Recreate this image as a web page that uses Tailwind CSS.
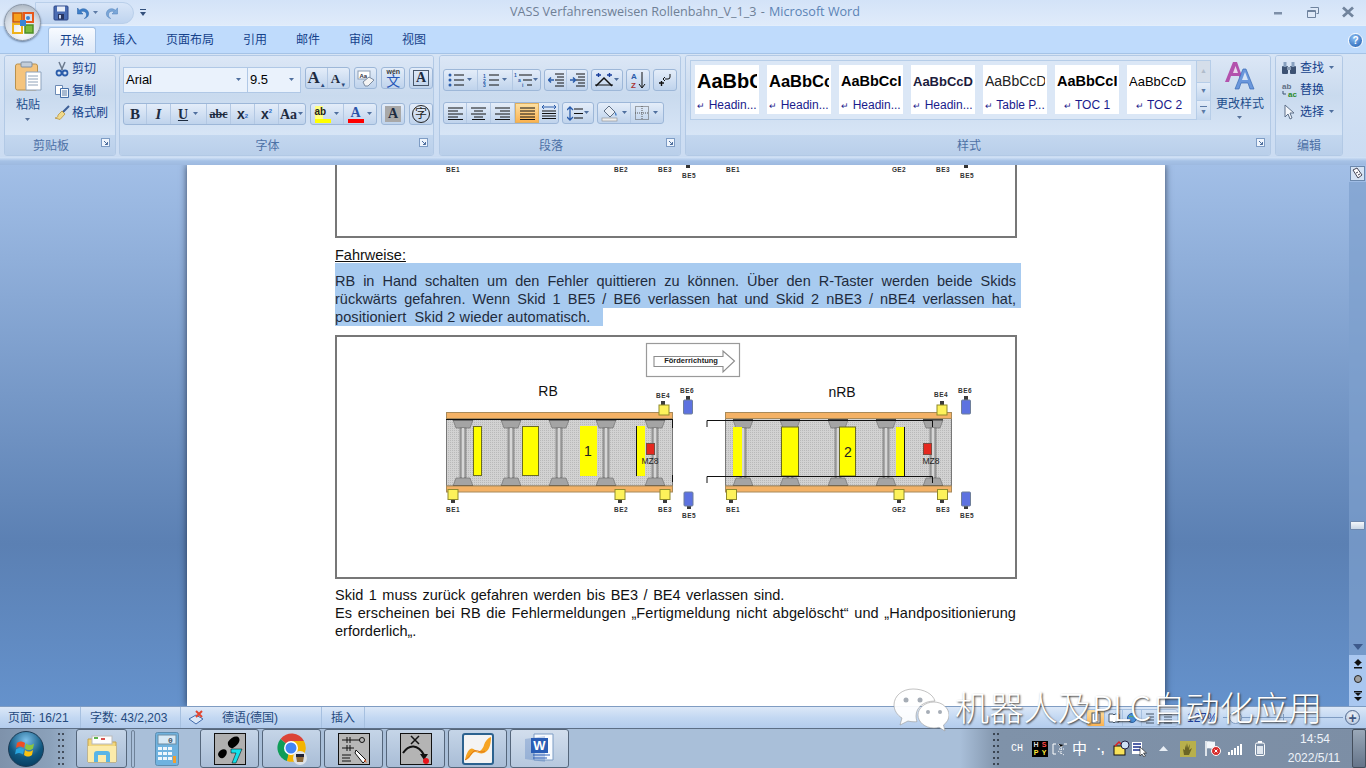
<!DOCTYPE html>
<html lang="de">
<head>
<meta charset="utf-8">
<title>VASS Verfahrensweisen Rollenbahn_V_1_3 - Microsoft Word</title>
<script src="https://cdn.jsdelivr.net/npm/@tailwindcss/browser@4"></script>
</head>
<body class="m-0 overflow-hidden">
<div class="relative flex h-[768px] w-[1366px] flex-col overflow-hidden font-['Liberation_Sans','Noto_Sans_CJK_SC',sans-serif] text-[12px] text-[#15428b]">

  <!-- title bar -->
  <div class="relative flex h-[26px] shrink-0 items-center justify-center border-b border-[#e3eefb] bg-linear-to-b from-[#d3e3f8] to-[#e0ebfa]">
    <span class="ml-[4px] font-['Open_Sans',sans-serif] text-[12.600px] text-[#6f8096]">VASS Verfahrensweisen Rollenbahn_V_1_3 <span class="px-[1px]">-</span> <span class="text-[#5a83b5]">Microsoft Word</span></span>
    <div class="absolute right-[11px] top-0 flex h-[24px] items-center gap-[21px]">
      <svg width="14" height="14" viewBox="0 0 14 14"><rect x="3" y="7" width="8" height="2.500" fill="#7d8fa8"/></svg>
      <svg width="14" height="14" viewBox="0 0 14 14"><path d="M4.500 2.500h8v6h-2M1.500 5.500h8v7h-8z" fill="#dfe9f7" stroke="#6f839e"/><rect x="2" y="5" width="7" height="2" fill="#6f839e"/></svg>
      <svg width="14" height="14" viewBox="0 0 14 14"><path d="M2 2.500l10 9M12 2.500l-10 9" stroke="#71849d" stroke-width="2.800"/></svg>
    </div>
  </div>

  <!-- office button and quick access -->
  <div class="absolute left-[35px] top-[2px] flex h-[22px] w-[99px] items-center gap-[2px] rounded-r-full border border-[#b9cfea] bg-linear-to-b from-[#d9e6f8] to-[#bfd4ef] pl-[17px]">
    <svg width="16" height="16" viewBox="0 0 16 16"><rect x="1" y="1" width="14" height="14" rx="1" fill="#4a6cb3" stroke="#2d4686"/><rect x="4" y="1.500" width="8" height="5" fill="#e8eef8"/><rect x="5" y="9" width="6" height="5.500" fill="#27345f"/><rect x="6" y="10" width="2" height="3.500" fill="#c6d4ec"/></svg>
    <svg class="ml-[3px]" width="16" height="16" viewBox="0 0 16 16"><path d="M3.500 3v6h5.500L6.800 6.800C9 5.500 12 6.500 12.500 9c.4 1.800-.6 3.500-2.200 4.500 3.300-.5 5-3.500 4-6.400C13.200 3.800 9 2.500 5.700 5.200z" fill="#3e7fc9" stroke="#235a9e" stroke-width=".5"/></svg>
    <svg class="ml-[1px]" width="6" height="4" viewBox="0 0 6 4"><path d="M0 0h5L2.500 3z" fill="#5d7ba6"/></svg>
    <svg class="ml-[4px]" width="16" height="16" viewBox="0 0 16 16"><path d="M12.500 3v6H7l2.200-2.200C7 5.500 4 6.500 3.500 9c-.4 1.800.6 3.500 2.200 4.500-3.300-.5-5-3.500-4-6.400C2.800 3.800 7 2.500 10.300 5.200z" fill="#7ba7d8" stroke="#4f7fb8" stroke-width=".5"/></svg>
  </div>
  <svg class="absolute left-[140px] top-[9px]" width="7" height="8" viewBox="0 0 7 8"><rect x="0" y="0" width="6" height="1" fill="#33507c"/><path d="M0 3h6L3 7z" fill="#33507c"/></svg>
  <div class="absolute left-[4px] top-[4px] z-20 flex h-[37px] w-[37px] items-center justify-center rounded-full border border-[#8c98a8] bg-[radial-gradient(circle_at_50%_75%,#ffffff,#d6dde6_55%,#98a4b2)] shadow-[0_1px_2px_rgba(40,60,90,.6)]">
    <svg width="24" height="24" viewBox="0 0 24 24"><path d="M2 2h9v9H2z" fill="#f6a11e" stroke="#c9550c" stroke-width="1.500"/><path d="M13 2h9v9h-9z" fill="none" stroke="#e8581a" stroke-width="2"/><path d="M2 13h9v9H2z" fill="none" stroke="#efb21c" stroke-width="2"/><path d="M14 14h8v8h-8z" fill="#7dbb3c" stroke="#4e8f24" stroke-width="1.500"/><rect x="9" y="9" width="6" height="6" fill="#3b84d6"/><circle cx="17" cy="7" r="2" fill="#3b84d6"/></svg>
  </div>

  <!-- tabs -->
  <div class="flex h-[27px] shrink-0 items-end bg-[#bfdbfc] pl-[48px] text-[12px]">
    <div class="flex h-[26px] w-[48px] items-center justify-center rounded-t-[3px] border border-b-0 border-[#a3c0e3] bg-linear-to-b from-[#f8fbff] to-[#dce8f8]">开始</div>
    <div class="ml-[17px] flex h-[26px] items-center gap-[29px]">
      <span>插入</span><span>页面布局</span><span>引用</span><span>邮件</span><span>审阅</span><span>视图</span>
    </div>
    <div class="ml-auto mb-[5px] mr-[3px] flex h-[15px] w-[15px] items-center justify-center rounded-full border border-[#fff] bg-[radial-gradient(circle_at_40%_30%,#8cc0f5,#1c59ad)] text-[10px] font-bold leading-none text-white">?</div>
  </div>

  <!-- ribbon -->
  <div class="flex h-[104px] shrink-0 gap-[3px] border-t border-[#a5c3e6] bg-linear-to-b from-[#d6e4f5] to-[#cbdcf2] pl-[4px] pt-[1px]">

    <!-- clipboard -->
    <section class="flex h-[101px] w-[112px] flex-col overflow-hidden rounded-[3px] border border-[#b2c9e5]">
      <div class="flex h-[80px] bg-linear-to-b from-[#dce7f6] via-[#c9daee] to-[#d7e5f6] pt-[5px]">
        <div class="flex w-[46px] flex-col items-center">
          <svg width="27" height="30" viewBox="0 0 27 30"><rect x=".5" y="3" width="22" height="26" rx="2" fill="#f5c47d" stroke="#b9914e"/><rect x="6" y="1" width="11" height="5" rx="1" fill="#c3cdd9" stroke="#7e8ea2"/><path d="M11 11h15v18H11z" fill="#fff" stroke="#8ea3bd"/><path d="M13 15h10M13 18h10M13 21h10M13 24h10" stroke="#8fa2b9"/></svg>
          <span class="mt-[6px] text-[12px] leading-[16px] text-[#1e4e8c]">粘贴</span>
          <svg class="mt-[5px]" width="6" height="4" viewBox="0 0 6 4"><path d="M0 0h5L2.500 3z" fill="#58729a"/></svg>
        </div>
        <div class="flex flex-col gap-[6px] pl-[3px]">
          <div class="flex h-[16px] items-center gap-[2px]"><svg width="16" height="16" viewBox="0 0 16 16"><path d="M5 1l3.500 8M11 1L7.500 9" stroke="#6b7a8e" stroke-width="1.500"/><circle cx="5" cy="12" r="2.500" fill="none" stroke="#2a5caa" stroke-width="1.800"/><circle cx="11" cy="12" r="2.500" fill="none" stroke="#2a5caa" stroke-width="1.800"/></svg><span>剪切</span></div>
          <div class="flex h-[16px] items-center gap-[2px]"><svg width="16" height="16" viewBox="0 0 16 16"><path d="M1.500 2.500h7v9h-7z" fill="#fff" stroke="#6d8bb5"/><path d="M6.500 5.500h8v9h-8z" fill="#f2f6fb" stroke="#456fa8"/><path d="M8 8h5M8 10h5M8 12h5" stroke="#5e7ea8"/></svg><span>复制</span></div>
          <div class="flex h-[16px] items-center gap-[2px]"><svg width="16" height="16" viewBox="0 0 16 16"><path d="M15 1L8 8" stroke="#3e5f96" stroke-width="2"/><path d="M8 6l3 3-5 5.500L1 13c2 0 3-1 3-3z" fill="#efd98b" stroke="#b58b2f" stroke-width=".7"/></svg><span>格式刷</span></div>
        </div>
      </div>
      <div class="relative flex h-[20px] items-center justify-center bg-linear-to-b from-[#c3d7ef] to-[#b9cfea] pr-[18px] pt-[1px] text-[#4d71a6]">剪贴板<svg class="absolute right-[5px] top-[3px]" width="9" height="9" viewBox="0 0 9 9"><rect x=".5" y=".5" width="8" height="8" fill="#eef4fc" stroke="#7e9cc4"/><path d="M3 3l3.500 3.500M6.500 4v2.500H4" stroke="#4e6f9e" fill="none"/></svg></div>
    </section>

    <!-- font -->
    <section class="flex h-[101px] w-[315px] flex-col overflow-hidden rounded-[3px] border border-[#b2c9e5]">
      <div class="flex h-[80px] flex-col bg-linear-to-b from-[#dce7f6] via-[#c9daee] to-[#d7e5f6] pl-[3px] pt-[11px]">
        <div class="flex h-[26px] items-start gap-[4px]">
          <div class="flex h-[26px] w-[180px] border border-[#b0c8e6] bg-[#eaf2fc] text-[13px] text-black">
            <div class="flex w-[124px] items-center justify-between border-r border-[#b0c8e6] px-[2px] pr-[5px]">Arial<svg width="6" height="4" viewBox="0 0 6 4"><path d="M0 0h5L2.500 3z" fill="#4f6f9e"/></svg></div>
            <div class="flex flex-1 items-center justify-between pl-[2px] pr-[5px]">9.5<svg width="6" height="4" viewBox="0 0 6 4"><path d="M0 0h5L2.500 3z" fill="#4f6f9e"/></svg></div>
          </div>
          <div class="flex h-[22px] w-[45px] rounded-[3px] border border-[#9db7d8] bg-linear-to-b from-[#e4edf9] to-[#bfd3ec] font-['Liberation_Serif',serif] font-bold text-[#1d2b3f]">
            <div class="flex w-[22px] items-end justify-center border-r border-[#b3c8e3] text-[17px] leading-[20px]">A<sup class="text-[6px] text-[#2c4a7a]">▲</sup></div>
            <div class="flex flex-1 items-end justify-center text-[13px] leading-[19px]">A<sup class="text-[6px] text-[#2c4a7a]">▼</sup></div>
          </div>
          <div class="flex h-[22px] w-[24px] items-center justify-center rounded-[3px] border border-[#9db7d8] bg-linear-to-b from-[#e4edf9] to-[#bfd3ec]"><svg width="18" height="17" viewBox="0 0 18 17"><rect x="1" y="1" width="12" height="8" fill="#fff" stroke="#8c9db3"/><text x="2.500" y="7.500" font-size="6" font-family="Liberation Sans" font-weight="bold" fill="#334">Aa</text><path d="M6 12l6-5 5 3-6 6H8z" fill="#f4f4f4" stroke="#7b8ba0"/></svg></div>
          <div class="flex h-[22px] w-[24px] flex-col items-center justify-center rounded-[3px] border border-[#9db7d8] bg-linear-to-b from-[#e4edf9] to-[#bfd3ec] leading-none"><span class="text-[7px] font-bold text-[#3a3a3a]">wén</span><span class="mt-[-1px] text-[14px] text-[#2456b8]">文</span></div>
          <div class="flex h-[22px] w-[24px] items-center justify-center rounded-[3px] border border-[#9db7d8] bg-linear-to-b from-[#e4edf9] to-[#bfd3ec]"><span class="flex h-[16px] w-[16px] items-center justify-center border border-[#47566a] font-['Liberation_Serif',serif] text-[14px] font-bold leading-none text-[#1d2b3f]">A</span></div>
        </div>
        <div class="mt-[10px] flex h-[22px] gap-[4px]">
          <div class="flex h-[22px] w-[183px] rounded-[3px] border border-[#9db7d8] bg-linear-to-b from-[#e4edf9] to-[#bfd3ec] font-['Liberation_Serif',serif] text-[#1d2b3f]">
            <div class="flex w-[23px] items-center justify-center border-r border-[#b3c8e3] text-[15px] font-bold">B</div>
            <div class="flex w-[24px] items-center justify-center border-r border-[#b3c8e3] text-[15px] font-bold italic">I</div>
            <div class="flex w-[36px] items-center justify-center gap-[5px] border-r border-[#b3c8e3]"><span class="text-[14px] font-bold underline">U</span><svg width="6" height="4" viewBox="0 0 6 4"><path d="M0 0h5L2.500 3z" fill="#4f6f9e"/></svg></div>
            <div class="flex w-[24px] items-center justify-center border-r border-[#b3c8e3] text-[12px] font-bold line-through">abc</div>
            <div class="flex w-[24px] items-center justify-center border-r border-[#b3c8e3] font-['Liberation_Sans'] text-[14px] font-bold">x<sub class="text-[6px] text-[#2c69c6]">2</sub></div>
            <div class="flex w-[24px] items-center justify-center border-r border-[#b3c8e3] font-['Liberation_Sans'] text-[14px] font-bold">x<sup class="text-[6px] text-[#2c69c6]">2</sup></div>
            <div class="flex flex-1 items-center justify-center gap-[1px] text-[14px] font-bold">Aa<svg width="6" height="4" viewBox="0 0 6 4"><path d="M0 0h5L2.500 3z" fill="#4f6f9e"/></svg></div>
          </div>
          <div class="flex h-[22px] w-[67px] rounded-[3px] border border-[#9db7d8] bg-linear-to-b from-[#e4edf9] to-[#bfd3ec]">
            <div class="flex w-[33px] items-center justify-center gap-[3px] border-r border-[#b3c8e3]"><div class="flex flex-col"><span class="h-[13px] w-[16px] bg-[linear-gradient(90deg,#ffff80_50%,transparent_50%)] text-[10px] font-bold leading-[12px] text-[#222]">ab</span><span class="h-[4px] w-[16px] bg-[#ffff00]"></span></div><svg width="6" height="4" viewBox="0 0 6 4"><path d="M0 0h5L2.500 3z" fill="#4f6f9e"/></svg></div>
            <div class="flex flex-1 items-center justify-center gap-[3px]"><div class="flex flex-col items-center"><span class="font-['Liberation_Serif',serif] text-[14px] font-bold leading-[13px] text-[#2a53a8]">A</span><span class="h-[4px] w-[16px] bg-[#ff0000]"></span></div><svg width="6" height="4" viewBox="0 0 6 4"><path d="M0 0h5L2.500 3z" fill="#4f6f9e"/></svg></div>
          </div>
          <div class="flex h-[22px] w-[24px] items-center justify-center rounded-[3px] border border-[#9db7d8] bg-linear-to-b from-[#e4edf9] to-[#bfd3ec]"><span class="flex h-[16px] w-[16px] items-center justify-center bg-[#a8a8a8] font-['Liberation_Serif',serif] text-[14px] font-bold leading-none text-[#1d2b3f]">A</span></div>
          <div class="flex h-[22px] w-[24px] items-center justify-center rounded-[3px] border border-[#9db7d8] bg-linear-to-b from-[#e4edf9] to-[#bfd3ec]"><span class="flex h-[18px] w-[18px] items-center justify-center rounded-full border border-[#222] text-[12px] leading-none text-[#222]">字</span></div>
        </div>
      </div>
      <div class="relative flex h-[20px] items-center justify-center bg-linear-to-b from-[#c3d7ef] to-[#b9cfea] pr-[18px] pt-[1px] text-[#4d71a6]">字体<svg class="absolute right-[5px] top-[3px]" width="9" height="9" viewBox="0 0 9 9"><rect x=".5" y=".5" width="8" height="8" fill="#eef4fc" stroke="#7e9cc4"/><path d="M3 3l3.500 3.500M6.500 4v2.500H4" stroke="#4e6f9e" fill="none"/></svg></div>
    </section>

    <!-- paragraph -->
    <section class="ml-[2px] flex h-[101px] w-[242px] flex-col overflow-hidden rounded-[3px] border border-[#b2c9e5]">
      <div class="flex h-[80px] flex-col bg-linear-to-b from-[#dce7f6] via-[#c9daee] to-[#d7e5f6] pl-[3px] pt-[13px]">
        <div class="flex h-[22px] gap-[3px]">
          <div class="flex h-[22px] w-[98px] rounded-[3px] border border-[#9db7d8] bg-linear-to-b from-[#e4edf9] to-[#bfd3ec]">
            <div class="flex w-[34px] items-center justify-center gap-[3px] border-r border-[#b3c8e3]"><svg width="16" height="14" viewBox="0 0 16 14"><path d="M6 2h10M6 7h10M6 12h10" stroke="#111"/><circle cx="2" cy="2" r="1.500" fill="#2a5caa"/><circle cx="2" cy="7" r="1.500" fill="#2a5caa"/><circle cx="2" cy="12" r="1.500" fill="#2a5caa"/></svg><svg width="6" height="4" viewBox="0 0 6 4"><path d="M0 0h5L2.500 3z" fill="#4f6f9e"/></svg></div>
            <div class="flex w-[35px] items-center justify-center gap-[3px] border-r border-[#b3c8e3]"><svg width="16" height="14" viewBox="0 0 16 14"><path d="M6 2h10M6 7h10M6 12h10" stroke="#111"/><text x="0" y="4.500" font-size="5" font-weight="bold" fill="#2a5caa">1</text><text x="0" y="9.500" font-size="5" font-weight="bold" fill="#2a5caa">2</text><text x="0" y="14" font-size="5" font-weight="bold" fill="#2a5caa">3</text></svg><svg width="6" height="4" viewBox="0 0 6 4"><path d="M0 0h5L2.500 3z" fill="#4f6f9e"/></svg></div>
            <div class="flex flex-1 items-center justify-center gap-[1px]"><svg width="18" height="16" viewBox="0 0 18 16"><path d="M5 3h13M9 8h9M13 13h5" stroke="#111"/><text x="0" y="5" font-size="5" font-weight="bold" fill="#2a5caa">1</text><text x="4" y="10" font-size="5" font-weight="bold" fill="#2a5caa">a</text><text x="8" y="15" font-size="5" font-weight="bold" fill="#2a5caa">i</text></svg><svg width="6" height="4" viewBox="0 0 6 4"><path d="M0 0h5L2.500 3z" fill="#4f6f9e"/></svg></div>
          </div>
          <div class="flex h-[22px] w-[44px] rounded-[3px] border border-[#9db7d8] bg-linear-to-b from-[#e4edf9] to-[#bfd3ec]">
            <div class="flex w-[22px] items-center justify-center border-r border-[#b3c8e3]"><svg width="16" height="14" viewBox="0 0 16 14"><path d="M7 1h9M9 4h7M7 7h9M9 10h7M7 13h9" stroke="#111"/><path d="M6 7H1m2-2.500L.500 7 3 9.500" stroke="#2a5caa" fill="none" stroke-width="1.500"/></svg></div>
            <div class="flex flex-1 items-center justify-center"><svg width="16" height="14" viewBox="0 0 16 14"><path d="M7 1h9M9 4h7M7 7h9M9 10h7M7 13h9" stroke="#111"/><path d="M1 7h5m-2-2.500L6.500 7 4 9.500" stroke="#2a5caa" fill="none" stroke-width="1.500"/></svg></div>
          </div>
          <div class="flex h-[22px] w-[32px] items-center justify-center gap-[1px] rounded-[3px] border border-[#9db7d8] bg-linear-to-b from-[#e4edf9] to-[#bfd3ec]"><svg width="18" height="14" viewBox="0 0 18 14"><path d="M1 13L9 5l8 8" stroke="#111" stroke-width="1.500" fill="none"/><path d="M0 12h18" stroke="#111"/><path d="M1 2h5M3.500 0v4M12 2h5M14.500 0v4" stroke="#1a3f9c" stroke-width="1.400"/></svg><svg width="6" height="4" viewBox="0 0 6 4"><path d="M0 0h5L2.500 3z" fill="#4f6f9e"/></svg></div>
          <div class="flex h-[22px] w-[24px] items-center justify-center rounded-[3px] border border-[#9db7d8] bg-linear-to-b from-[#e4edf9] to-[#bfd3ec]"><svg width="16" height="18" viewBox="0 0 16 18"><text x="1" y="8" font-size="8" font-weight="bold" fill="#2a5caa">A</text><text x="1" y="17" font-size="8" font-weight="bold" fill="#a33">Z</text><path d="M12 1v15m-3-3l3 4 3-4" stroke="#111" fill="none"/></svg></div>
          <div class="flex h-[22px] w-[24px] items-center justify-center rounded-[3px] border border-[#9db7d8] bg-linear-to-b from-[#e4edf9] to-[#bfd3ec]"><svg width="14" height="14" viewBox="0 0 14 14"><path d="M12 1v3a2 2 0 0 1-2 2H7M7 4L5 6l2 2" stroke="#111" fill="none"/><path d="M1 10h5M3.500 8v5" stroke="#111" stroke-width="1.400"/></svg></div>
        </div>
        <div class="mt-[11px] flex h-[22px] gap-[3px]">
          <div class="flex h-[22px] w-[116px] rounded-[3px] border border-[#9db7d8] bg-linear-to-b from-[#e4edf9] to-[#bfd3ec]">
            <div class="flex w-[23px] items-center justify-center border-r border-[#b3c8e3]"><svg width="15" height="13" viewBox="0 0 15 13"><path d="M0 1h15M0 4h10M0 7h15M0 10h10M0 12.500h15" stroke="#111"/></svg></div>
            <div class="flex w-[24px] items-center justify-center border-r border-[#b3c8e3]"><svg width="15" height="13" viewBox="0 0 15 13"><path d="M0 1h15M3 4h9M0 7h15M3 10h9M1 12.500h13" stroke="#111"/></svg></div>
            <div class="flex w-[24px] items-center justify-center border-r border-[#b3c8e3]"><svg width="15" height="13" viewBox="0 0 15 13"><path d="M0 1h15M5 4h10M0 7h15M5 10h10M0 12.500h15" stroke="#111"/></svg></div>
            <div class="flex w-[24px] items-center justify-center border border-[#e0b060] bg-linear-to-b from-[#fde0a0] to-[#fbb24f]"><svg width="15" height="13" viewBox="0 0 15 13"><path d="M0 1h15M0 4h15M0 7h15M0 10h15M0 12.500h15" stroke="#111"/></svg></div>
            <div class="flex flex-1 items-center justify-center"><svg width="16" height="16" viewBox="0 0 16 16"><path d="M1 6h14M1 8.500h14M1 11h14M1 13.500h14" stroke="#111"/><path d="M1 2h14M3 0L1 2l2 2M13 0l2 2-2 2" stroke="#2a5caa" fill="none"/></svg></div>
          </div>
          <div class="flex h-[22px] w-[32px] items-center justify-center gap-[1px] rounded-[3px] border border-[#9db7d8] bg-linear-to-b from-[#e4edf9] to-[#bfd3ec]"><svg width="16" height="15" viewBox="0 0 16 15"><path d="M7 3h9M7 7.500h9M7 12h9" stroke="#111"/><path d="M3 1v13M0 4l3-3 3 3M0 11l3 3 3-3" stroke="#2a5caa" fill="none" stroke-width="1.300"/></svg><svg width="6" height="4" viewBox="0 0 6 4"><path d="M0 0h5L2.500 3z" fill="#4f6f9e"/></svg></div>
          <div class="flex h-[22px] w-[67px] rounded-[3px] border border-[#9db7d8] bg-linear-to-b from-[#e4edf9] to-[#bfd3ec]">
            <div class="flex w-[33px] items-center justify-center gap-[3px] border-r border-[#b3c8e3]"><svg width="18" height="17" viewBox="0 0 18 17"><path d="M8 1l6 6-5 5-6-6z" fill="#e8eef6" stroke="#5f6f84"/><path d="M14 7c2 2 2 3 1 4-1-1-1-2-1-4z" fill="#3d78c2"/><rect x="1" y="13" width="15" height="3" fill="#eee" stroke="#8a8a8a" stroke-width=".6"/></svg><svg width="6" height="4" viewBox="0 0 6 4"><path d="M0 0h5L2.500 3z" fill="#4f6f9e"/></svg></div>
            <div class="flex flex-1 items-center justify-center gap-[4px]"><svg width="14" height="14" viewBox="0 0 14 14"><rect x=".5" y=".5" width="13" height="13" fill="none" stroke="#555" stroke-dasharray="1 1"/><path d="M7 0v14M0 7h14" stroke="#555" stroke-dasharray="1 1"/></svg><svg width="6" height="4" viewBox="0 0 6 4"><path d="M0 0h5L2.500 3z" fill="#4f6f9e"/></svg></div>
          </div>
        </div>
      </div>
      <div class="relative flex h-[20px] items-center justify-center bg-linear-to-b from-[#c3d7ef] to-[#b9cfea] pr-[18px] pt-[1px] text-[#4d71a6]">段落<svg class="absolute right-[5px] top-[3px]" width="9" height="9" viewBox="0 0 9 9"><rect x=".5" y=".5" width="8" height="8" fill="#eef4fc" stroke="#7e9cc4"/><path d="M3 3l3.500 3.500M6.500 4v2.500H4" stroke="#4e6f9e" fill="none"/></svg></div>
    </section>

    <!-- styles -->
    <section class="ml-[1px] flex h-[101px] w-[586px] flex-col overflow-hidden rounded-[3px] border border-[#b2c9e5]">
      <div class="flex h-[80px] bg-linear-to-b from-[#dce7f6] via-[#c9daee] to-[#d7e5f6] pl-[4px] pt-[4px]">
        <div class="flex h-[60px] border border-[#b6cde8] bg-[#dbe7f6] pl-[4px] pt-[4px]">
          <div class="flex gap-[8px]">
            <div class="flex h-[49px] w-[64px] flex-col items-center overflow-hidden bg-white"><span class="mt-[5px] h-[23px] w-[60px] overflow-hidden whitespace-nowrap text-[20px] font-bold leading-[23px] text-black">AaBbC</span><span class="mt-[5px] text-[12px] leading-[14px] text-[#1a1a8c]"><span class="text-[9px]">↵</span> Headin...</span></div>
            <div class="flex h-[49px] w-[64px] flex-col items-center overflow-hidden bg-white"><span class="mt-[5px] h-[23px] w-[60px] overflow-hidden whitespace-nowrap text-[16.500px] font-bold leading-[23px] text-black">AaBbCc</span><span class="mt-[5px] text-[12px] leading-[14px] text-[#1a1a8c]"><span class="text-[9px]">↵</span> Headin...</span></div>
            <div class="flex h-[49px] w-[64px] flex-col items-center overflow-hidden bg-white"><span class="mt-[5px] h-[23px] w-[60px] overflow-hidden whitespace-nowrap text-[14.500px] font-bold leading-[23px] text-black">AaBbCcI</span><span class="mt-[5px] text-[12px] leading-[14px] text-[#1a1a8c]"><span class="text-[9px]">↵</span> Headin...</span></div>
            <div class="flex h-[49px] w-[64px] flex-col items-center overflow-hidden bg-white"><span class="mt-[5px] h-[23px] w-[60px] overflow-hidden whitespace-nowrap text-[13px] font-bold leading-[23px] text-[#1c1c3c]">AaBbCcD</span><span class="mt-[5px] text-[12px] leading-[14px] text-[#1a1a8c]"><span class="text-[9px]">↵</span> Headin...</span></div>
            <div class="flex h-[49px] w-[64px] flex-col items-center overflow-hidden bg-white"><span class="mt-[5px] h-[23px] w-[60px] overflow-hidden whitespace-nowrap text-[14px] leading-[23px] text-[#222]">AaBbCcD</span><span class="mt-[5px] text-[12px] leading-[14px] text-[#1a1a8c]"><span class="text-[9px]">↵</span> Table P...</span></div>
            <div class="flex h-[49px] w-[64px] flex-col items-center overflow-hidden bg-white"><span class="mt-[5px] h-[23px] w-[60px] overflow-hidden whitespace-nowrap text-[14.500px] font-bold leading-[23px] text-black">AaBbCcI</span><span class="mt-[5px] text-[12px] leading-[14px] text-[#1a1a8c]"><span class="text-[9px]">↵</span> TOC 1</span></div>
            <div class="flex h-[49px] w-[64px] flex-col items-center overflow-hidden bg-white"><span class="mt-[5px] h-[23px] w-[60px] overflow-hidden whitespace-nowrap text-[13px] leading-[23px] text-black">AaBbCcD</span><span class="mt-[5px] text-[12px] leading-[14px] text-[#1a1a8c]"><span class="text-[9px]">↵</span> TOC 2</span></div>
          </div>
          <div class="ml-[5px] mt-[-4px] flex h-[59px] w-[14px] flex-col border-l border-[#b6cde8] text-[#5c7aa6]">
            <div class="flex h-[21px] items-center justify-center bg-[#d5deea] text-[7px] text-[#b1bccb]">▲</div>
            <div class="flex h-[19px] items-center justify-center border-y border-[#b6cde8] bg-linear-to-b from-[#e4edf9] to-[#c4d7ee] text-[7px]">▼</div>
            <div class="flex flex-1 flex-col items-center justify-center bg-linear-to-b from-[#e4edf9] to-[#c4d7ee] text-[7px] leading-none"><span class="h-[2px] w-[7px] border-t border-[#5c7aa6]"></span>▼</div>
          </div>
        </div>
        <div class="ml-[3px] flex w-[52px] flex-col items-center pt-[1px]">
          <svg width="32" height="30" viewBox="0 0 32 30"><path d="M1 21L9 1h4l7 20h-3l-2-6H7l-2 6z" fill="#b352ad"/><path d="M9 12h5l-2.500-7z" fill="#e8d7ec"/><path d="M11 28l8-20h3l8 20h-4l-2-6h-7l-2 6z" fill="#6a97dc" stroke="#3a6bb5" stroke-width=".7"/><path d="M18 19h6l-3-8z" fill="#d6e4f6"/></svg>
          <span class="mt-[5px] whitespace-nowrap text-[12px] leading-[16px] text-[#1e4e8c]">更改样式</span>
          <svg class="mt-[4px]" width="6" height="4" viewBox="0 0 6 4"><path d="M0 0h5L2.500 3z" fill="#58729a"/></svg>
        </div>
      </div>
      <div class="relative flex h-[20px] items-center justify-center bg-linear-to-b from-[#c3d7ef] to-[#b9cfea] pr-[18px] pt-[1px] text-[#4d71a6]">样式<svg class="absolute right-[5px] top-[3px]" width="9" height="9" viewBox="0 0 9 9"><rect x=".5" y=".5" width="8" height="8" fill="#eef4fc" stroke="#7e9cc4"/><path d="M3 3l3.500 3.500M6.500 4v2.500H4" stroke="#4e6f9e" fill="none"/></svg></div>
    </section>

    <!-- editing -->
    <section class="ml-[1px] flex h-[101px] w-[68px] flex-col overflow-hidden rounded-[3px] border border-[#b2c9e5]">
      <div class="flex h-[80px] flex-col gap-[6px] bg-linear-to-b from-[#dce7f6] via-[#c9daee] to-[#d7e5f6] pl-[5px] pt-[4px]">
        <div class="flex h-[16px] items-center gap-[3px]"><svg width="16" height="14" viewBox="0 0 16 14"><rect x="1" y="5" width="6" height="8" rx="1" fill="#3d5273"/><rect x="9" y="5" width="6" height="8" rx="1" fill="#3d5273"/><rect x="2.500" y="1" width="3" height="5" fill="#88a0bf"/><rect x="10.500" y="1" width="3" height="5" fill="#88a0bf"/><rect x="6" y="6" width="4" height="3" fill="#8d9fb7"/></svg><span>查找</span><svg class="ml-[2px]" width="6" height="4" viewBox="0 0 6 4"><path d="M0 0h5L2.500 3z" fill="#4f6f9e"/></svg></div>
        <div class="flex h-[16px] items-center gap-[3px]"><svg width="16" height="16" viewBox="0 0 16 16"><text x="1" y="7" font-size="8" font-weight="bold" fill="#5f6f84">ab</text><text x="7" y="15" font-size="8" font-weight="bold" fill="#2a8a2a">ac</text><path d="M2 9v3h3" stroke="#3d5273" fill="none"/></svg><span>替换</span></div>
        <div class="flex h-[16px] items-center gap-[3px]"><svg width="16" height="16" viewBox="0 0 16 16"><path d="M4 1v12l3-3 2 5 2-1-2-5h4z" fill="#f4f7fb" stroke="#5d6f88"/></svg><span>选择</span><svg class="ml-[2px]" width="6" height="4" viewBox="0 0 6 4"><path d="M0 0h5L2.500 3z" fill="#4f6f9e"/></svg></div>
      </div>
      <div class="flex h-[20px] items-center justify-center bg-linear-to-b from-[#c3d7ef] to-[#b9cfea] pt-[1px] text-[#4d71a6]">编辑</div>
    </section>
  </div>

  <!-- band under ribbon -->
  <div class="h-[8px] shrink-0 bg-linear-to-b from-[#d4e4f7] via-[#a5c1e6] to-[#9db9e0]"></div>

  <!-- document area -->
  <div class="flex min-h-0 flex-1 bg-linear-to-b from-[#a2bfe7] via-[#5b80b3] via-70% to-[#6592cc]">
    <div class="flex-1 overflow-hidden pl-[187px]">
      <article class="h-full w-[978px] bg-white pl-[148px] text-[14.500px] leading-[18px] text-[#111] shadow-[0_0_7px_rgba(20,30,50,.75)] font-['Liberation_Sans',sans-serif]">

        <!-- cut-off upper figure -->
        <div class="h-[73px] w-[682px] border-x-2 border-b-2 border-[#777]">
          <svg width="678" height="20" viewBox="337 165 678 20" class="block">
            <g font-family="Liberation Sans" font-size="6.500" font-weight="bold" fill="#333" text-anchor="middle" letter-spacing=".4">
              <text x="453" y="171.500">BE1</text><text x="621" y="171.500">BE2</text><text x="665" y="171.500">BE3</text><text x="689" y="177.500">BE5</text>
              <text x="733" y="171.500">BE1</text><text x="899" y="171.500">GE2</text><text x="943" y="171.500">BE3</text><text x="967" y="177.500">BE5</text>
            </g>
            <rect x="686" y="165" width="4" height="3" fill="#333"/><rect x="964" y="165" width="4" height="3" fill="#333"/>
          </svg>
        </div>

        <p class="mt-[8px] h-[18px] w-fit underline">Fahrweise:</p>

        <!-- selected paragraph -->
        <div class="-mt-[1px] w-[686px] bg-[#a8cbf0] pt-[9px] text-[#1f2b3d]">
          <p class="w-[681px] [text-align-last:justify]">RB in Hand schalten um den Fehler quittieren zu können. Über den R-Taster werden beide Skids</p>
          <p class="w-[681px] [text-align-last:justify]">rückwärts gefahren. Wenn Skid 1 BE5 / BE6 verlassen hat und Skid 2 nBE3 / nBE4 verlassen hat,</p>
        </div>
        <p class="w-[268px] bg-[#a8cbf0] tracking-[.1px] text-[#1f2b3d]">positioniert&nbsp; Skid 2 wieder automatisch.</p>

        <!-- figure -->
        <div class="mt-[9px] h-[244px] w-[682px] border-2 border-[#777]">
          <svg width="678" height="240" viewBox="337 337 678 240" class="block">
            <defs>
              <pattern id="dots" width="2" height="2" patternUnits="userSpaceOnUse"><rect width="2" height="2" fill="#d2d2d2"/><rect width="1" height="1" fill="#b9b9b9"/></pattern>
              <g id="roller">
                <path d="M-10 0H10L7 8H-7z" fill="#a4a4a4" stroke="#666" stroke-width=".6"/><rect x="-10" y="-1" width="20" height="1.500" fill="#444"/>
                <rect x="-3" y="8" width="6" height="50" fill="#a8a8a8" stroke="#666" stroke-width=".6"/><rect x="-1" y="8" width="2" height="50" fill="#d6d6d6"/>
                <path d="M-7 58H7L10 66H-10z" fill="#a4a4a4" stroke="#666" stroke-width=".6"/><rect x="-10" y="65" width="20" height="1.500" fill="#444"/>
              </g>
              <g id="ysq"><rect x="-5" y="-5" width="10" height="10" fill="#fdf25a" stroke="#8f8a2c"/></g>
              <g id="neck"><rect x="-2" y="-2" width="4" height="4" fill="#3c3c3c"/></g>
              <g id="blue"><rect x="-4.500" y="-7" width="9" height="14" rx="1" fill="#5d72e0" stroke="#6f7f9a"/></g>
            </defs>

            <!-- direction box -->
            <rect x="646.500" y="343.500" width="93" height="33" fill="#fff" stroke="#9a9a9a" stroke-width="1.200"/>
            <path d="M654 356.500H723V351L734.500 361 723 372V366.500H654z" fill="#fff" stroke="#8c8c8c" stroke-width="1.100"/>
            <text x="691" y="362.500" font-family="Liberation Sans" font-size="7.500" font-weight="bold" fill="#222" text-anchor="middle">Förderrichtung</text>

            <g font-family="Liberation Sans" font-size="14" fill="#111" text-anchor="middle"><text x="548" y="396">RB</text><text x="842" y="397">nRB</text></g>

            <!-- left conveyor -->
            <rect x="446.500" y="418" width="226" height="68" fill="url(#dots)" stroke="#777"/>
            <use href="#roller" x="463" y="420"/><use href="#roller" x="511" y="420"/><use href="#roller" x="559" y="420"/><use href="#roller" x="606" y="420"/><use href="#roller" x="655" y="420"/>
            <rect x="446.500" y="412.500" width="226" height="6" fill="#f4b266" stroke="#a88a5a"/>
            <rect x="446.500" y="486" width="226" height="6" fill="#f4b266" stroke="#a88a5a"/>
            <path d="M446 419.500H673M672.500 419.500V428M672.500 475V482" stroke="#111" fill="none"/>
            <rect x="473.500" y="426.500" width="8" height="49" fill="#ffff00" stroke="#6b6b20"/>
            <rect x="522.500" y="426.500" width="16" height="49" fill="#ffff00" stroke="#6b6b20"/>
            <rect x="580" y="426" width="17" height="50" fill="#ffff00"/>
            <rect x="636" y="426" width="9" height="50" fill="#ffff00"/><path d="M636.500 426v50" stroke="#111"/>
            <rect x="646.500" y="443.500" width="8" height="11" fill="#e5281f" stroke="#7a4a40"/>
            <text x="588" y="456" font-family="Liberation Sans" font-size="14" fill="#222" text-anchor="middle">1</text>
            <text x="650" y="464" font-family="Liberation Sans" font-size="8.500" fill="#222" text-anchor="middle">MZ8</text>

            <!-- right conveyor -->
            <rect x="725.500" y="418" width="226" height="68" fill="url(#dots)" stroke="#777"/>
            <use href="#roller" x="743" y="420"/><use href="#roller" x="790" y="420"/><use href="#roller" x="838" y="420"/><use href="#roller" x="886" y="420"/><use href="#roller" x="933" y="420"/>
            <rect x="725.500" y="412.500" width="226" height="6" fill="#f4b266" stroke="#a88a5a"/>
            <rect x="725.500" y="486" width="226" height="6" fill="#f4b266" stroke="#a88a5a"/>
            <rect x="733" y="427" width="9" height="49" fill="#ffff00"/>
            <rect x="781.500" y="427" width="17" height="49" fill="#ffff00" stroke="#6b6b20"/>
            <rect x="839.500" y="427" width="16" height="49" fill="#ffff00" stroke="#6b6b20"/>
            <rect x="896" y="427" width="8" height="49" fill="#ffff00"/><path d="M904.500 427v49" stroke="#111"/>
            <rect x="923.500" y="443.500" width="8" height="11" fill="#e5281f" stroke="#7a4a40"/>
            <text x="848" y="457" font-family="Liberation Sans" font-size="14" fill="#222" text-anchor="middle">2</text>
            <text x="931" y="464" font-family="Liberation Sans" font-size="8.500" fill="#222" text-anchor="middle">MZ8</text>
            <path d="M707 427V420.500H932.500V427M707 483V476.500H932.500V483" stroke="#111" fill="none"/>

            <!-- sensors -->
            <use href="#neck" x="663" y="403"/><use href="#ysq" x="664" y="410"/>
            <use href="#neck" x="453" y="501"/><use href="#ysq" x="453" y="494.500"/>
            <use href="#neck" x="620" y="501"/><use href="#ysq" x="620" y="494.500"/>
            <use href="#neck" x="665" y="501"/><use href="#ysq" x="665" y="494.500"/>
            <use href="#neck" x="688" y="398"/><use href="#blue" x="688" y="407"/>
            <use href="#neck" x="689" y="507"/><use href="#blue" x="688.500" y="499"/>
            <use href="#neck" x="942" y="403"/><use href="#ysq" x="942" y="410"/>
            <use href="#neck" x="966" y="398"/><use href="#blue" x="966" y="407"/>
            <use href="#neck" x="731" y="501"/><use href="#ysq" x="731.500" y="494.500"/>
            <use href="#neck" x="899" y="501"/><use href="#ysq" x="899" y="494.500"/>
            <use href="#neck" x="942" y="501"/><use href="#ysq" x="942.500" y="494.500"/>
            <use href="#neck" x="966" y="507"/><use href="#blue" x="966" y="499"/>
            <g font-family="Liberation Sans" font-size="6.500" font-weight="bold" fill="#333" text-anchor="middle" letter-spacing=".4">
              <text x="663" y="398">BE4</text><text x="687" y="393">BE6</text><text x="453" y="512">BE1</text><text x="621" y="512">BE2</text><text x="665" y="512">BE3</text><text x="689" y="518">BE5</text>
              <text x="941" y="397">BE4</text><text x="965" y="393">BE6</text><text x="733" y="512">BE1</text><text x="899" y="512">GE2</text><text x="943" y="512">BE3</text><text x="967" y="518">BE5</text>
            </g>
          </svg>
        </div>

        <div class="mt-[7px] w-[681px] leading-[18px]">
          <p class="[word-spacing:1.500px]">Skid 1 muss zurück gefahren werden bis BE3 / BE4 verlassen sind.</p>
          <p class="tracking-[.1px] [text-align-last:justify]">Es erscheinen bei RB die Fehlermeldungen „Fertigmeldung nicht abgelöscht“ und „Handpositionierung</p>
          <p>erforderlich„.</p>
        </div>
      </article>
    </div>

    <!-- vertical scrollbar -->
    <aside class="flex w-[17px] shrink-0 flex-col">
      <div class="flex h-[17px] items-center justify-center"><svg width="15" height="15" viewBox="0 0 15 15"><rect x=".5" y=".5" width="14" height="14" fill="#d5e3f4" stroke="#6b88ad"/><path d="M3 4l4-2 5 7-4 3z" fill="#fff" stroke="#445"/><path d="M6 7l2-1M8 9l2-1" stroke="#445"/></svg></div>
      <div class="flex h-[473px] flex-col items-center bg-[#7ea0cd]/70">
        <div class="h-[339px]"></div>
        <div class="h-[9px] w-[15px] rounded-[1px] border border-[#6f88ad] bg-linear-to-b from-[#f4f7fb] to-[#c9d6e6]"></div>
        <div class="mt-[114px] h-0 w-0 border-x-[5px] border-t-[6px] border-x-transparent border-t-[#3e5a8c]"></div>
      </div>
      <div class="flex flex-1 flex-col items-center gap-[6px] bg-[#a9c7f0] pt-[4px]">
        <svg width="8" height="10" viewBox="0 0 8 10"><path d="M0 4l4-4 4 4zM0 8h8v1.500H0zM1 4h6l-3 3z" fill="#111"/></svg>
        <div class="h-[8px] w-[8px] rounded-full border border-[#222] bg-[#a0a0a0]"></div>
        <svg class="mt-[2px]" width="8" height="10" viewBox="0 0 8 10"><path d="M0 0h8v1.500H0zM0 6l4 4 4-4zM1 2h6L4 5z" fill="#111"/></svg>
      </div>
    </aside>
  </div>

  <!-- status bar -->
  <div class="relative flex h-[22px] shrink-0 items-center border-t border-[#7f9cc2] bg-linear-to-b from-[#dce8f7] via-[#c3d8f2] to-[#b3cced] text-[12px] text-[#254a7e]">
    <div class="flex h-full w-[81px] items-center border-r border-[#a6c0e0] pl-[8px]">页面: 16/21</div>
    <div class="flex h-full w-[100px] items-center border-r border-[#a6c0e0] pl-[9px]">字数: 43/2,203</div>
    <div class="flex h-full w-[141px] items-center border-r border-[#a6c0e0] pl-[7px]"><svg width="16" height="16" viewBox="0 0 16 16"><path d="M1 9l7-4 7 4-7 5z" fill="#dbe8f8" stroke="#426bab"/><path d="M8 1l6 6M14 1L8 7" stroke="#e2452f" stroke-width="2"/></svg><span class="ml-[18px]">德语(德国)</span></div>
    <div class="flex h-full w-[43px] items-center justify-center border-r border-[#a6c0e0]">插入</div>
    <div class="ml-auto flex items-center pr-[6px]">
      <div class="mr-[9px] flex h-[18px] w-[92px] overflow-hidden rounded-[3px] border border-[#a6c0e0]">
        <div class="flex flex-1 items-center justify-center border-r border-[#a6c0e0] bg-linear-to-b from-[#fde0a0] to-[#fbb24f]"><svg width="12" height="12" viewBox="0 0 12 12"><rect x="2" y="1" width="8" height="10" fill="#fff" stroke="#456"/><path d="M4 3h4M4 5h4M4 7h4" stroke="#456"/></svg></div>
        <div class="flex flex-1 items-center justify-center border-r border-[#a6c0e0]"><svg width="12" height="12" viewBox="0 0 12 12"><path d="M1 2h4l1 1 1-1h4v8H7l-1 1-1-1H1z" fill="#fff" stroke="#456"/></svg></div>
        <div class="flex flex-1 items-center justify-center border-r border-[#a6c0e0]"><svg width="12" height="12" viewBox="0 0 12 12"><circle cx="6" cy="6" r="4.500" fill="#4a8fd8" stroke="#2c5e9c"/><path d="M3 5c2-2 3 1 5-1" stroke="#5fb04a" fill="none"/></svg></div>
        <div class="flex flex-1 items-center justify-center border-r border-[#a6c0e0]"><svg width="12" height="12" viewBox="0 0 12 12"><path d="M2 2h8M4 5h6M4 8h6M2 11h8" stroke="#456"/></svg></div>
        <div class="flex flex-1 items-center justify-center"><svg width="12" height="12" viewBox="0 0 12 12"><path d="M2 2h8M2 5h8M2 8h8M2 11h8" stroke="#456"/></svg></div>
      </div>
      <span class="w-[28px] text-[#1f3f9c]">127%</span>
      <div class="relative ml-[8px] h-[1px] w-[120px] bg-[#7f9cc2]">
        <div class="absolute left-[6px] top-[-6px] h-[13px] w-[13px] rounded-full border border-[#7f9cc2] bg-[#dfe9f6]"></div>
        <div class="absolute left-[60px] top-[-3px] h-[7px] w-[1px] bg-[#7f9cc2]"></div>
      </div>
      <div class="ml-[2px] flex h-[15px] w-[15px] items-center justify-center rounded-full border border-[#51698f] bg-[radial-gradient(circle_at_50%_35%,#f3f7fc,#aebfd7)] text-[14px] font-bold leading-none text-[#3f5680]">+</div>
    </div>
  </div>

  <!-- taskbar -->
  <div class="flex h-[40px] shrink-0 items-center border-t border-[#5d6f86] bg-[linear-gradient(90deg,#7e92ab_0,#8ba1ba_50px,#a9bfd9_90px,#a9bfd9_960px,#7f92a9_1000px,#7c8ea5_100%)] text-white">
    <div class="ml-[8px] flex h-[36px] w-[36px] shrink-0 items-center justify-center rounded-full border border-[#1c3b55] bg-[radial-gradient(circle_at_50%_25%,#7cc0ea,#10577f_55%,#063354)]">
      <svg width="22" height="22" viewBox="0 0 22 22"><path d="M2 5c3-2 5-2 8 0l-1 5c-3-2-5-2-8 0z" fill="#f04e23"/><path d="M11 5.500c3 2 5 2 8 0l-1 5c-3 2-5 2-8 0z" fill="#8cc63f"/><path d="M1 11.500c3-2 5-2 8 0l-1 5c-3-2-5-2-8 0z" fill="#29a6e0"/><path d="M10 12c3 2 5 2 8 0l-1 5c-3 2-5 2-8 0z" fill="#fbc20f"/></svg>
    </div>
    <div class="ml-[14px] grid h-[32px] w-[8px] shrink-0 grid-cols-2 content-between"><i class="h-[2px] w-[2px] bg-[#444e5c]"></i><i class="h-[2px] w-[2px] bg-[#444e5c]"></i><i class="h-[2px] w-[2px] bg-[#444e5c]"></i><i class="h-[2px] w-[2px] bg-[#444e5c]"></i><i class="h-[2px] w-[2px] bg-[#444e5c]"></i><i class="h-[2px] w-[2px] bg-[#444e5c]"></i><i class="h-[2px] w-[2px] bg-[#444e5c]"></i><i class="h-[2px] w-[2px] bg-[#444e5c]"></i><i class="h-[2px] w-[2px] bg-[#444e5c]"></i><i class="h-[2px] w-[2px] bg-[#444e5c]"></i><i class="h-[2px] w-[2px] bg-[#444e5c]"></i><i class="h-[2px] w-[2px] bg-[#444e5c]"></i></div>
    <div class="ml-[10px] flex h-[39px] w-[51px] shrink-0 items-center justify-center rounded-[3px] border border-[#55667b] bg-linear-to-b from-[#c5d5e8] to-[#a9bdd6]">
      <svg width="32" height="30" viewBox="0 0 32 30"><path d="M2 5h10l2 3h16v20H2z" fill="#f2d77c" stroke="#c6a24b"/><rect x="6" y="2" width="20" height="8" fill="#fdfdfd" stroke="#bbb"/><rect x="8" y="3" width="4" height="2" fill="#5db34d"/><rect x="15" y="4" width="4" height="2" fill="#d9534f"/><path d="M2 12h28v16H2z" fill="#fcebaa"/><path d="M8 28V20c0-2 1-3 3-3h10c2 0 3 1 3 3v8h-4v-7h-8v7z" fill="#59b5e6"/></svg>
    </div>
    <div class="ml-[4px] h-[38px] w-[4px] shrink-0 rounded-[2px] border border-[#6f8299]"></div>
    <div class="flex w-[64px] shrink-0 justify-center">
      <svg width="24" height="34" viewBox="0 0 24 34"><rect x=".5" y=".5" width="23" height="33" rx="2" fill="#6fb2df" stroke="#5d8db0"/><rect x="3" y="3" width="18" height="9" fill="#d7e9f6" stroke="#6f8da3"/><text x="13" y="11" font-size="8" font-weight="bold" fill="#456" font-family="Liberation Mono">0</text><g fill="#eef6fc"><rect x="3" y="15" width="4" height="3"/><rect x="8" y="15" width="4" height="3"/><rect x="13" y="15" width="4" height="3"/><rect x="3" y="20" width="4" height="3"/><rect x="8" y="20" width="4" height="3"/><rect x="13" y="20" width="4" height="3"/><rect x="3" y="25" width="4" height="3"/><rect x="8" y="25" width="4" height="3"/><rect x="13" y="25" width="4" height="3"/></g><rect x="18" y="24" width="3" height="7" fill="#f0a030"/></svg>
    </div>
    <div class="ml-[1px] flex h-[39px] w-[59px] shrink-0 items-center justify-center rounded-[3px] border border-[#55667b] bg-linear-to-b from-[#c5d5e8] to-[#a9bdd6]">
      <svg width="32" height="32" viewBox="0 0 32 32"><rect x=".5" y=".5" width="31" height="31" fill="#b0b0b0" stroke="#111"/><path d="M14 9c3-5 9-7 11-4s-2 8-6 10c-2 1-6-2-5-6zM4 21c1-4 6-6 8-4s0 7-3 8c-2 1-5-1-5-4z" fill="#000"/><path d="M17 16h11l-6 14h-4l4-10h-5z" fill="#14e0ea" stroke="#000" stroke-width=".5"/></svg>
    </div>
    <div class="ml-[3px] flex h-[39px] w-[59px] shrink-0 items-center justify-center rounded-[3px] border border-[#55667b] bg-linear-to-b from-[#c5d5e8] to-[#a9bdd6]">
      <svg width="34" height="34" viewBox="0 0 34 34"><path d="M16 16L5.500 7A14 14 0 0 1 29 9H16z" fill="#db4437"/><path d="M16 16L5.500 7A14 14 0 0 0 12 29z" fill="#0f9d58"/><path d="M16 9h13a14 14 0 0 1-17 20z" fill="#f4b400"/><circle cx="16" cy="16" r="7" fill="#fff"/><circle cx="16" cy="16" r="5.500" fill="#4285f4"/><circle cx="25" cy="26" r="7" fill="#dfe3e8"/><path d="M21 24h8l-1 6h-6z" fill="#8c6a3c"/><rect x="21" y="22" width="8" height="3" fill="#223"/></svg>
    </div>
    <div class="ml-[3px] flex h-[39px] w-[59px] shrink-0 items-center justify-center rounded-[3px] border border-[#55667b] bg-linear-to-b from-[#c5d5e8] to-[#a9bdd6]">
      <svg width="32" height="32" viewBox="0 0 32 32"><rect x=".5" y=".5" width="31" height="31" fill="#b7b7b7" stroke="#111"/><path d="M4 7h18M4 15h12M9 4v6M12 4v6M9 12v6M12 12v6M4 22h9M4 25h8M4 28h9" stroke="#111"/><circle cx="24" cy="7" r="2.500" fill="none" stroke="#111"/><path d="M18 17l10 10-3 3-8-10z" fill="#fff" stroke="#111"/><path d="M26 28l3 2-2-4z" fill="#e63"/></svg>
    </div>
    <div class="ml-[3px] flex h-[39px] w-[59px] shrink-0 items-center justify-center rounded-[3px] border border-[#55667b] bg-linear-to-b from-[#c5d5e8] to-[#a9bdd6]">
      <svg width="32" height="32" viewBox="0 0 32 32"><rect x=".5" y=".5" width="31" height="31" fill="#b4b4b4" stroke="#111"/><path d="M11 3l8 8M19 3l-8 8" stroke="#111" stroke-width="1.500"/><path d="M3 20c6-9 15-9 21 2" stroke="#111" stroke-width="2" fill="none"/><path d="M20 21h8l-4 6z" fill="#111"/><circle cx="26" cy="28" r="3" fill="#e8141c"/></svg>
    </div>
    <div class="ml-[3px] flex h-[39px] w-[59px] shrink-0 items-center justify-center rounded-[3px] border border-[#55667b] bg-linear-to-b from-[#c5d5e8] to-[#a9bdd6]">
      <svg width="32" height="32" viewBox="0 0 32 32"><rect x="1" y="1" width="30" height="30" rx="2" fill="#f4f4f4" stroke="#2c628f" stroke-width="2"/><path d="M3 27c2-10 6-14 10-10s8-1 9-5 4-7 7-8c0 8-2 14-7 16s-8-3-11 0-4 7-8 7z" fill="#f6a423"/><path d="M3 27c4-2 6-7 9-9s7 3 11 0" stroke="#e07818" fill="none"/></svg>
    </div>
    <div class="ml-[3px] flex h-[39px] w-[59px] shrink-0 items-center justify-center rounded-[3px] border border-[#55667b] bg-linear-to-b from-[#d2deed] to-[#b6c8de]">
      <svg width="32" height="32" viewBox="0 0 32 32"><path d="M10 1h19v26H10z" fill="#f8fbff" stroke="#7d9cc4"/><path d="M1 6l20-3v26L1 26z" fill="#2b5fb3" opacity=".25"/><rect x="7" y="5" width="17" height="15" fill="#2a5db5"/><text x="15.500" y="17" font-family="Liberation Sans" font-size="13" font-weight="bold" fill="#fff" text-anchor="middle">W</text><path d="M9 22h17M9 25h14" stroke="#2a5db5"/></svg>
    </div>

    <!-- tray -->
    <div class="ml-[424px] grid h-[32px] w-[8px] shrink-0 grid-cols-2 content-between"><i class="h-[2px] w-[2px] bg-[#3b4552]"></i><i class="h-[2px] w-[2px] bg-[#3b4552]"></i><i class="h-[2px] w-[2px] bg-[#3b4552]"></i><i class="h-[2px] w-[2px] bg-[#3b4552]"></i><i class="h-[2px] w-[2px] bg-[#3b4552]"></i><i class="h-[2px] w-[2px] bg-[#3b4552]"></i><i class="h-[2px] w-[2px] bg-[#3b4552]"></i><i class="h-[2px] w-[2px] bg-[#3b4552]"></i><i class="h-[2px] w-[2px] bg-[#3b4552]"></i><i class="h-[2px] w-[2px] bg-[#3b4552]"></i><i class="h-[2px] w-[2px] bg-[#3b4552]"></i><i class="h-[2px] w-[2px] bg-[#3b4552]"></i></div>
    <span class="ml-[10px] w-[20px] shrink-0 font-['Liberation_Mono',monospace] text-[10px]">CH</span>
    <div class="ml-[1px] grid h-[16px] w-[16px] shrink-0 grid-cols-2 bg-black text-center font-['Liberation_Sans'] text-[7px] font-bold leading-[8px]"><span class="text-[#ddd]">H</span><span class="text-[#ff4a4a]">S</span><span class="text-[#ffe93a]">P</span><span class="text-[#ffe93a]">Y</span></div>
    <svg class="ml-[4px] shrink-0" width="16" height="16" viewBox="0 0 16 16"><path d="M1 3h3M1 13h3M1 3v10M12 3h3" stroke="#fff" fill="none"/><path d="M6 3l3 3 3-2M7 8h6M9 6v8M6 10l6 4" stroke="#fff" stroke-dasharray="1 1"/></svg>
    <span class="ml-[4px] w-[17px] shrink-0 text-[15px] leading-none">中</span>
    <span class="ml-[8px] w-[16px] shrink-0 text-[12px] font-bold leading-none">·,</span>
    <svg class="shrink-0" width="18" height="17" viewBox="0 0 18 17"><rect x="1" y="6" width="11" height="9" fill="#f8e25a" stroke="#111"/><path d="M2 6l4-4 3 3" stroke="#d22" stroke-width="1.500" fill="none"/><circle cx="12" cy="5" r="4" fill="#cfe0f4" stroke="#224"/></svg>
    <svg class="shrink-0" width="17" height="17" viewBox="0 0 17 17"><rect x="1" y="2" width="10" height="12" fill="#fff"/><path d="M2 4h8M2 7h8M2 10h8" stroke="#1a2f8c" stroke-width="1.500"/><path d="M9 7v9l2-2 2 3 1.500-1-2-3h3z" fill="#fff" stroke="#111" stroke-width=".6"/></svg>
    <svg class="ml-[11px] shrink-0" width="9" height="5" viewBox="0 0 9 5"><path d="M0 5L4.500 0 9 5z" fill="#e8eef5"/></svg>
    <div class="ml-[12px] flex h-[16px] w-[16px] shrink-0 items-center justify-center bg-[#b8b04c]"><svg width="14" height="14" viewBox="0 0 14 14"><path d="M3 13L2 7l2 1V3l1 3 1-5 1 5 2-4-1 6 3-2-3 7z" fill="#6b6526"/></svg></div>
    <svg class="ml-[8px] shrink-0" width="18" height="17" viewBox="0 0 18 17"><path d="M2 1v15" stroke="#fff" stroke-width="1.500"/><path d="M3 1.500c3-1 5 1 8 0v7c-3 1-5-1-8 0z" fill="#f2f6fb"/><circle cx="12" cy="11" r="4.500" fill="#d82c2c" stroke="#fff"/><path d="M10.500 9.500l3 3M13.500 9.500l-3 3" stroke="#fff"/></svg>
    <svg class="ml-[6px] shrink-0" width="16" height="12" viewBox="0 0 16 12"><rect x="0" y="9" width="2" height="3" fill="#fff"/><rect x="3" y="7" width="2" height="5" fill="#fff"/><rect x="6" y="5" width="2" height="7" fill="#fff"/><rect x="9" y="3" width="2" height="9" fill="#fff"/><rect x="12" y="1" width="2" height="11" fill="#fff"/></svg>
    <svg class="ml-[11px] shrink-0" width="10" height="15" viewBox="0 0 10 15"><rect x=".5" y="2" width="9" height="12.500" rx="1.500" fill="none" stroke="#fff"/><rect x="3" y="0" width="4" height="2" fill="#fff"/><rect x="2" y="5" width="6" height="8" fill="#dfe6ee"/></svg>
    <div class="ml-[16px] flex w-[66px] shrink-0 flex-col items-center text-[12px] leading-[19px] text-[#edf2f8]"><span class="ml-[2px]">14:54</span><span>2022/5/11</span></div>
    <div class="ml-auto h-[39px] w-[14px] shrink-0 rounded-[2px] border border-[#444e5c] bg-linear-to-b from-[#9aa8b8] to-[#66758a]"></div>
  </div>

  <!-- watermark -->
  <div class="absolute left-[893px] top-[684px] z-30 flex items-center">
    <svg width="56" height="46" viewBox="0 0 56 46"><path d="M20 2C9 2 1 9 1 18c0 5 3 10 8 13l-2 7 8-4c2 .6 4 .8 6 .8 1 0 2 0 3-.2-.6-2-1-3.500-1-5.500 0-9 8-15 18-15h1C40 7 31 2 20 2z" fill="#fff" fill-opacity=".92" stroke="#999" stroke-width=".6"/><path d="M41 15c-9 0-16 6-16 13s7 13 16 13c2 0 3.500-.3 5-.7l6 3.700-1.500-6c3.500-2.500 5.500-6 5.500-10 0-7-7-13-15-13z" fill="#fff" stroke="#999" stroke-width=".6"/><circle cx="13" cy="13" r="2.500" fill="#a6adb6"/><circle cx="27" cy="13" r="2.500" fill="#a6adb6"/><circle cx="35" cy="25" r="2" fill="#a6adb6"/><circle cx="47" cy="25" r="2" fill="#a6adb6"/></svg>
    <span class="mb-[8px] ml-[6px] whitespace-nowrap font-['Noto_Sans_CJK_SC',sans-serif] text-[34.200px] font-light leading-[44px] text-white [text-shadow:1px_1px_2px_#333]">机器人及PLC自动化应用</span>
  </div>
</div>
</body>
</html>
